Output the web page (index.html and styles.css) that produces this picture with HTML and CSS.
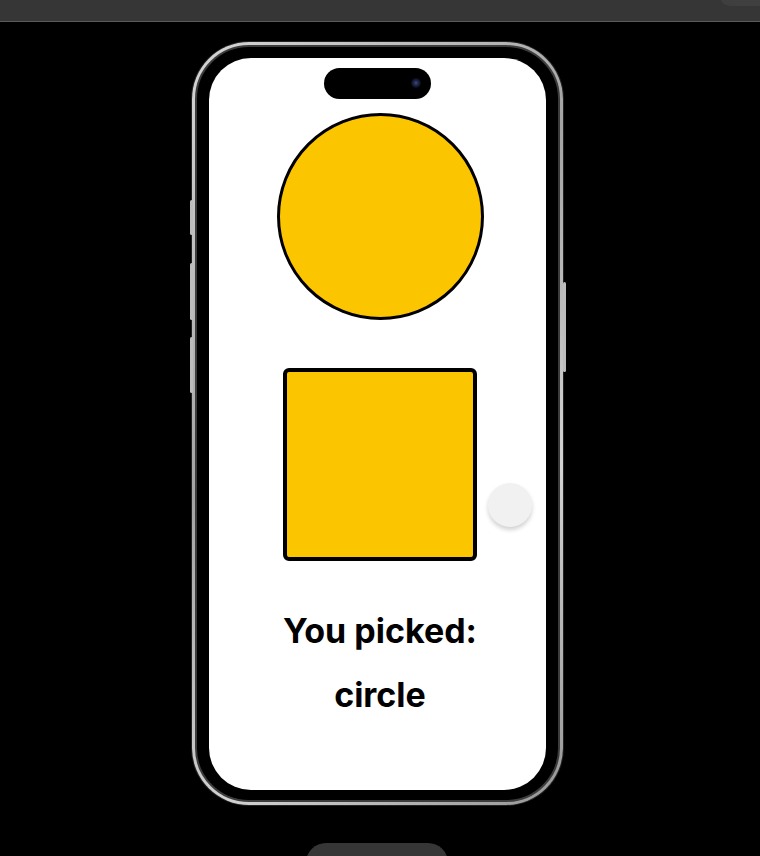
FILE: index.html
```html
<!DOCTYPE html>
<html>
<head>
<meta charset="utf-8">
<link rel="stylesheet" href="styles.css">
</head>
<body>
<div class="topbar"><div class="corner"></div></div>
<div class="stage">
  <div class="phone">
    <div class="btn btn-a"></div>
    <div class="btn btn-b"></div>
    <div class="btn btn-c"></div>
    <div class="btn btn-r"></div>
    <div class="bezel">
      <div class="screen">
        <div class="island"><div class="cam"></div></div>
        <div class="content">
          <div class="circle"></div>
          <div class="square"></div>
          <div class="label">
            <div class="line">You picked:</div>
            <div class="line">circle</div>
          </div>
        </div>
        <div class="toggle"></div>
      </div>
    </div>
  </div>
  <div class="pill"></div>
</div>
</body>
</html>
```
FILE: styles.css
```css
html, body {
  margin: 0;
  padding: 0;
  background: #000;
  height: 856px;
  overflow: hidden;
  font-family: Inter, "Liberation Sans", sans-serif;
}
.topbar {
  height: 21px;
  background: #363636;
  border-bottom: 1px solid #5a5a5a;
  position: relative;
  overflow: hidden;
}
.corner {
  position: absolute;
  right: -20px;
  top: -14px;
  width: 60px;
  height: 20px;
  border-radius: 12px;
  background: #3f3f3f;
}
.stage {
  display: flex;
  flex-direction: column;
  align-items: center;
  padding-top: 20px;
  padding-right: 6px;
}
.phone {
  position: relative;
  width: 371px;
  height: 763px;
  box-sizing: border-box;
  border-radius: 57px;
  padding: 3px;
  background: linear-gradient(135deg, #d6d6d6, #a4a4a4 40%, #d2d2d2 70%, #959595);
  box-shadow: 0 0 0 1px #222;
}
.btn {
  position: absolute;
  width: 3px;
  background: #bdbdbd;
  border-radius: 2px;
}
.btn-a { left: -2px; top: 158px; height: 35px; }
.btn-b { left: -2px; top: 221px; height: 57px; }
.btn-c { left: -2px; top: 295px; height: 56px; }
.btn-r { right: -3px; top: 240px; height: 90px; }
.bezel {
  height: 100%;
  box-sizing: border-box;
  border-radius: 54px;
  background: #000;
  border: 2px solid #3c3c3c;
  padding: 11px 12px 10px 12px;
}
.screen {
  position: relative;
  height: 100%;
  background: #fff;
  border-radius: 42px;
  display: flex;
  flex-direction: column;
  align-items: center;
  overflow: hidden;
}
.island {
  margin-top: 10px;
  width: 107px;
  height: 31px;
  border-radius: 16px;
  background: #000;
  position: relative;
  flex-shrink: 0;
}
.cam {
  position: absolute;
  right: 10px;
  top: 10px;
  width: 10px;
  height: 10px;
  border-radius: 50%;
  background: radial-gradient(circle, #3a4a80 0, #1a2040 40%, #0a0a14 70%);
}
.content {
  display: flex;
  flex-direction: column;
  align-items: center;
  padding-left: 6px;
  padding-top: 14px;
}
.circle {
  width: 201px;
  height: 201px;
  border-radius: 50%;
  background: #fbc500;
  border: 3px solid #000;
}
.square {
  margin-top: 48px;
  margin-right: 1px;
  width: 186px;
  height: 185px;
  border-radius: 6px;
  background: #fbc500;
  border: 4px solid #000;
}
.label {
  margin-top: 38px;
  text-align: center;
  font-weight: 700;
  font-size: 34px;
  color: #000;
  letter-spacing: 0;
}
.line {
  line-height: 64px;
}
.toggle {
  position: absolute;
  left: 279px;
  top: 425px;
  width: 44px;
  height: 44px;
  border-radius: 50%;
  background: #f1f1f1;
  box-shadow: 0 3px 4px rgba(0, 0, 0, 0.18);
}
.pill {
  margin-top: 38px;
  width: 142px;
  height: 40px;
  border-radius: 20px;
  background: #363636;
}
```
